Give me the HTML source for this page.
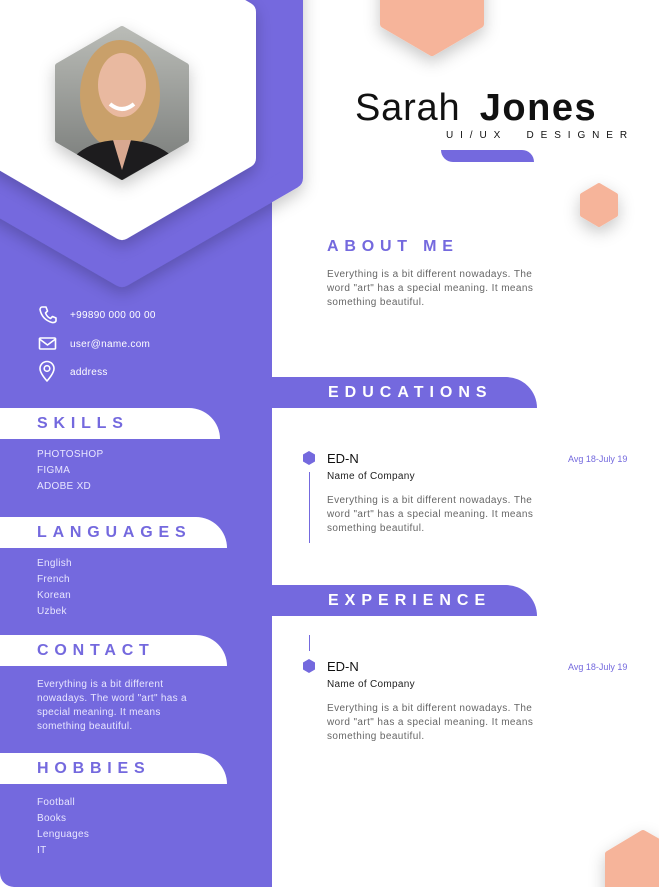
<!DOCTYPE html>
<html><head><meta charset="utf-8">
<style>
*{margin:0;padding:0;box-sizing:border-box}
body{width:659px;height:887px;overflow:hidden;background:#fff;font-family:"Liberation Sans",sans-serif;position:relative}
.abs{position:absolute}
.side{left:0;top:0;width:272px;height:887px;background:#7469de;border-bottom-left-radius:14px}
.wbar{background:#fff;height:31px;left:0;border-top-right-radius:32px}
.pbar{background:#7469de;height:31px;left:272px;width:265px;border-top-right-radius:32px}
.h{font-weight:bold;font-size:16px;letter-spacing:5.8px;color:#7469de}
.hw{font-weight:bold;font-size:16px;letter-spacing:6px;color:#fff}
.st{color:#e8e6ff;font-size:10px;line-height:16px;letter-spacing:0.3px}
.ct{color:#fff;font-size:10px;letter-spacing:0.3px}
.body{font-size:10px;color:#666;line-height:14px;letter-spacing:0.4px}
</style></head><body>
<div class="abs side"></div>
<svg class="abs" style="left:0;top:0" width="659" height="887">
<defs><filter id="sh" x="-60%" y="-60%" width="220%" height="220%"><feDropShadow dx="0" dy="6" stdDeviation="8" flood-color="#000" flood-opacity="0.22"/></filter>
<linearGradient id="bg" x1="0" y1="0" x2="0" y2="1"><stop offset="0" stop-color="#b9bbb6"/><stop offset="1" stop-color="#777a78"/></linearGradient></defs>
<polygon filter="url(#sh)" points="122,-120 292,-22 292,178 122,276 -48,178 -48,-22" fill="#7469de" stroke="#7469de" stroke-width="22" stroke-linejoin="round"/>
<polygon filter="url(#sh)" points="122,-60 246,12 246,158 122,230 -2,158 -2,12" fill="#fff" stroke="#fff" stroke-width="20" stroke-linejoin="round"/>
<g filter="url(#sh)">
<polygon points="122,29 186,66 186,140 122,177 58,140 58,66" fill="url(#bg)" stroke="url(#bg)" stroke-width="6" stroke-linejoin="round"/>
</g>
<clipPath id="cp"><polygon points="122,26 189,64 189,142 122,180 55,142 55,64"/></clipPath>
<g clip-path="url(#cp)">
<ellipse cx="120" cy="95" rx="40" ry="55" fill="#c9a06a"/>
<ellipse cx="122" cy="85" rx="24" ry="32" fill="#e9b9a0"/>
<path d="M60 185 Q70 140 122 140 Q175 140 190 185Z" fill="#1d1c1e"/>
<path d="M113 140 L122 170 L131 140Z" fill="#d9a890"/>
<path d="M110 104 Q122 114 134 104" stroke="#fff" stroke-width="4" fill="none"/>
</g>
<polygon filter="url(#sh)" points="384,-40 480,-40 480,24 432,52 384,24" fill="#f6b49a" stroke="#f6b49a" stroke-width="8" stroke-linejoin="round"/>
<polygon filter="url(#sh)" points="599,185 616,195 616,215 599,225 582,215 582,195" fill="#f6b49a" stroke="#f6b49a" stroke-width="4" stroke-linejoin="round"/>
<polygon filter="url(#sh)" points="643,833 680,854 680,900 608,900 608,854" fill="#f6b49a" stroke="#f6b49a" stroke-width="6" stroke-linejoin="round"/>
</svg>

<div class="abs" style="left:355px;top:87px;font-size:38px;color:#111;white-space:nowrap;letter-spacing:0.8px">Sarah <b style="margin-left:8px;letter-spacing:1.5px">Jones</b></div>
<div class="abs" style="left:446px;top:130px;font-size:10px;letter-spacing:6.9px;color:#111;white-space:nowrap">UI/UX &nbsp;DESIGNER</div>
<div class="abs" style="left:441px;top:150px;width:93px;height:12px;background:#7469de;border-top-right-radius:12px;border-bottom-left-radius:12px"></div>

<div class="abs h" style="left:327px;top:238px">ABOUT ME</div>
<div class="abs body" style="left:327px;top:268px;width:215px">Everything is a bit different nowadays. The word "art" has a special meaning. It means something beautiful.</div>

<svg class="abs" style="left:38px;top:305px" width="20" height="80" fill="none" stroke="#fff" stroke-width="1.6" stroke-linecap="round" stroke-linejoin="round">
<path d="M4 2 L8 2 L9.5 6 L7.5 8 Q9 12 12.5 13.5 L14.5 11.5 L18 13 L18 16 Q17 18 14 17.5 Q4 14.5 2 4.5 Q2.5 2 4 2Z"/>
<rect x="1.5" y="33" width="16" height="11" rx="1"/><path d="M1.5 34 L9.5 40 L17.5 34"/>
<path d="M9 76 Q2 68 2 63.5 A7 7 0 0 1 16 63.5 Q16 68 9 76Z"/><circle cx="9" cy="63.5" r="2.8"/>
</svg>
<div class="abs ct" style="left:70px;top:310px">+99890 000 00 00</div>
<div class="abs ct" style="left:70px;top:339px">user@name.com</div>
<div class="abs ct" style="left:70px;top:367px">address</div>

<div class="abs wbar" style="top:408px;width:220px"></div>
<div class="abs h" style="left:37px;top:415px">SKILLS</div>
<div class="abs st" style="left:37px;top:447px">PHOTOSHOP<br>FIGMA<br>ADOBE XD</div>

<div class="abs wbar" style="top:517px;width:227px"></div>
<div class="abs h" style="left:37px;top:524px">LANGUAGES</div>
<div class="abs st" style="left:37px;top:556px">English<br>French<br>Korean<br>Uzbek</div>

<div class="abs wbar" style="top:635px;width:227px"></div>
<div class="abs h" style="left:37px;top:642px">CONTACT</div>
<div class="abs st" style="left:37px;top:678px;width:160px;line-height:14px">Everything is a bit different nowadays. The word "art" has a special meaning. It means something beautiful.</div>

<div class="abs wbar" style="top:753px;width:227px"></div>
<div class="abs h" style="left:37px;top:760px">HOBBIES</div>
<div class="abs st" style="left:37px;top:795px">Football<br>Books<br>Lenguages<br>IT</div>

<div class="abs pbar" style="top:377px"></div>
<div class="abs hw" style="left:328px;top:384px">EDUCATIONS</div>
<svg class="abs" style="left:302px;top:450px" width="16" height="16"><polygon points="7,1 13,4.5 13,11.5 7,15 1,11.5 1,4.5" fill="#7469de"/></svg>
<div class="abs" style="left:309px;top:472px;width:1px;height:71px;background:#7469de"></div>
<div class="abs" style="left:327px;top:451px;font-size:13px;color:#111">ED-N</div>
<div class="abs" style="left:568px;top:454px;font-size:9px;color:#7469de">Avg 18-July 19</div>
<div class="abs" style="left:327px;top:471px;font-size:10px;color:#222;letter-spacing:0.3px">Name of Company</div>
<div class="abs body" style="left:327px;top:494px;width:215px">Everything is a bit different nowadays. The word "art" has a special meaning. It means something beautiful.</div>

<div class="abs pbar" style="top:585px"></div>
<div class="abs hw" style="left:328px;top:592px">EXPERIENCE</div>
<div class="abs" style="left:309px;top:635px;width:1px;height:16px;background:#7469de"></div>
<svg class="abs" style="left:302px;top:658px" width="16" height="16"><polygon points="7,1 13,4.5 13,11.5 7,15 1,11.5 1,4.5" fill="#7469de"/></svg>
<div class="abs" style="left:327px;top:659px;font-size:13px;color:#111">ED-N</div>
<div class="abs" style="left:568px;top:662px;font-size:9px;color:#7469de">Avg 18-July 19</div>
<div class="abs" style="left:327px;top:679px;font-size:10px;color:#222;letter-spacing:0.3px">Name of Company</div>
<div class="abs body" style="left:327px;top:702px;width:215px">Everything is a bit different nowadays. The word "art" has a special meaning. It means something beautiful.</div>
</body></html>
